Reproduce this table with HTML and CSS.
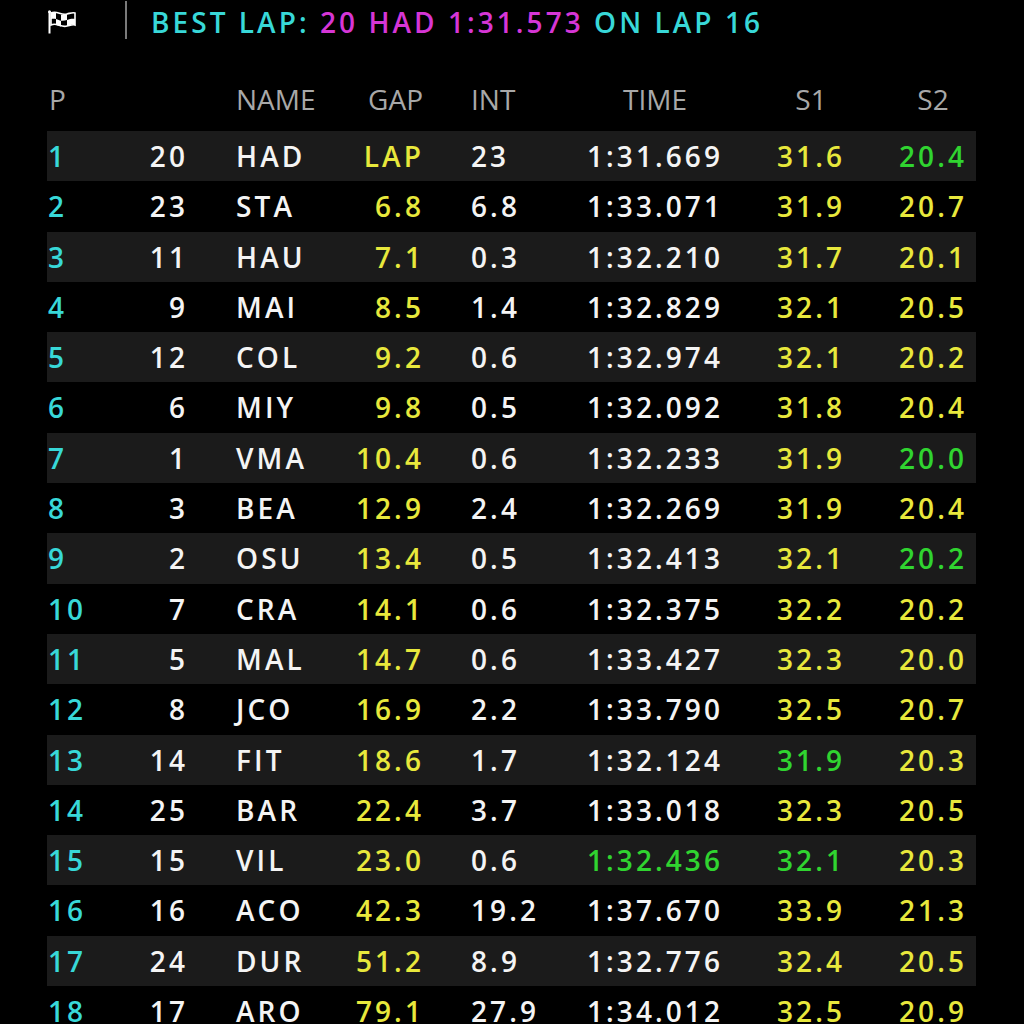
FILE: index.html
```html
<!DOCTYPE html>
<html>
<head>
<meta charset="utf-8">
<link rel="stylesheet" href="styles.css">
</head>
<body>
<div class="title">
  <svg class="flag" width="28" height="24" viewBox="0 0 28 24">
    <line x1="1.5" y1="1.5" x2="1.5" y2="23.5" stroke="#fff" stroke-width="2"/>
    <circle cx="1.5" cy="1.8" r="1.5" fill="#fff"/>
    <path d="M3 3 C9 0 13 6 19 4 C23 3 25 2 27 3 L27 15 C25 14 23 15 19 16 C13 18 9 12 3 15 Z" fill="#000" stroke="#fff" stroke-width="1.6"/>
    <path d="M3 3 C5 2.3 6.5 2.4 8 2.9 L8 9 C6.5 8.5 5 8.5 3 9 Z" fill="#fff"/>
    <path d="M13 4.7 C15 5 17 4.6 19 4 L19 10 C17 10.6 15 11 13 10.7 Z" fill="#fff"/>
    <path d="M8 9 C10 9.6 11.5 10.5 13 10.7 L13 16.5 C11.5 16.3 10 15.5 8 15 Z" fill="#fff"/>
    <path d="M19 10 C22 9 24.5 8.5 27 9 L27 15 C25 14 23 15 19 16 Z" fill="#fff"/>
  </svg>
  <span class="sep"></span>
  <span class="best"><span class="cy">BEST LAP: </span><span class="mg">20 HAD 1:31.573</span><span class="cy"> ON LAP 16</span></span>
</div>

<div class="board">
  <div class="row head">
    <span class="c1">P</span><span class="c2"></span><span class="c3">NAME</span><span class="c4">GAP</span><span class="c5">INT</span><span class="c6">TIME</span><span class="c7">S1</span><span class="c8">S2</span>
  </div>
  <div class="row odd"><span class="c1">1</span><span class="c2">20</span><span class="c3">HAD</span><span class="c4">LAP</span><span class="c5">23</span><span class="c6">1:31.669</span><span class="c7">31.6</span><span class="c8 g">20.4</span></div>
  <div class="row"><span class="c1">2</span><span class="c2">23</span><span class="c3">STA</span><span class="c4">6.8</span><span class="c5">6.8</span><span class="c6">1:33.071</span><span class="c7">31.9</span><span class="c8">20.7</span></div>
  <div class="row odd"><span class="c1">3</span><span class="c2">11</span><span class="c3">HAU</span><span class="c4">7.1</span><span class="c5">0.3</span><span class="c6">1:32.210</span><span class="c7">31.7</span><span class="c8">20.1</span></div>
  <div class="row"><span class="c1">4</span><span class="c2">9</span><span class="c3">MAI</span><span class="c4">8.5</span><span class="c5">1.4</span><span class="c6">1:32.829</span><span class="c7">32.1</span><span class="c8">20.5</span></div>
  <div class="row odd"><span class="c1">5</span><span class="c2">12</span><span class="c3">COL</span><span class="c4">9.2</span><span class="c5">0.6</span><span class="c6">1:32.974</span><span class="c7">32.1</span><span class="c8">20.2</span></div>
  <div class="row"><span class="c1">6</span><span class="c2">6</span><span class="c3">MIY</span><span class="c4">9.8</span><span class="c5">0.5</span><span class="c6">1:32.092</span><span class="c7">31.8</span><span class="c8">20.4</span></div>
  <div class="row odd"><span class="c1">7</span><span class="c2">1</span><span class="c3">VMA</span><span class="c4">10.4</span><span class="c5">0.6</span><span class="c6">1:32.233</span><span class="c7">31.9</span><span class="c8 g">20.0</span></div>
  <div class="row"><span class="c1">8</span><span class="c2">3</span><span class="c3">BEA</span><span class="c4">12.9</span><span class="c5">2.4</span><span class="c6">1:32.269</span><span class="c7">31.9</span><span class="c8">20.4</span></div>
  <div class="row odd"><span class="c1">9</span><span class="c2">2</span><span class="c3">OSU</span><span class="c4">13.4</span><span class="c5">0.5</span><span class="c6">1:32.413</span><span class="c7">32.1</span><span class="c8 g">20.2</span></div>
  <div class="row"><span class="c1">10</span><span class="c2">7</span><span class="c3">CRA</span><span class="c4">14.1</span><span class="c5">0.6</span><span class="c6">1:32.375</span><span class="c7">32.2</span><span class="c8">20.2</span></div>
  <div class="row odd"><span class="c1">11</span><span class="c2">5</span><span class="c3">MAL</span><span class="c4">14.7</span><span class="c5">0.6</span><span class="c6">1:33.427</span><span class="c7">32.3</span><span class="c8">20.0</span></div>
  <div class="row"><span class="c1">12</span><span class="c2">8</span><span class="c3">JCO</span><span class="c4">16.9</span><span class="c5">2.2</span><span class="c6">1:33.790</span><span class="c7">32.5</span><span class="c8">20.7</span></div>
  <div class="row odd"><span class="c1">13</span><span class="c2">14</span><span class="c3">FIT</span><span class="c4">18.6</span><span class="c5">1.7</span><span class="c6">1:32.124</span><span class="c7 g">31.9</span><span class="c8">20.3</span></div>
  <div class="row"><span class="c1">14</span><span class="c2">25</span><span class="c3">BAR</span><span class="c4">22.4</span><span class="c5">3.7</span><span class="c6">1:33.018</span><span class="c7">32.3</span><span class="c8">20.5</span></div>
  <div class="row odd"><span class="c1">15</span><span class="c2">15</span><span class="c3">VIL</span><span class="c4">23.0</span><span class="c5">0.6</span><span class="c6 g">1:32.436</span><span class="c7 g">32.1</span><span class="c8">20.3</span></div>
  <div class="row"><span class="c1">16</span><span class="c2">16</span><span class="c3">ACO</span><span class="c4">42.3</span><span class="c5">19.2</span><span class="c6">1:37.670</span><span class="c7">33.9</span><span class="c8">21.3</span></div>
  <div class="row odd"><span class="c1">17</span><span class="c2">24</span><span class="c3">DUR</span><span class="c4">51.2</span><span class="c5">8.9</span><span class="c6">1:32.776</span><span class="c7">32.4</span><span class="c8">20.5</span></div>
  <div class="row"><span class="c1">18</span><span class="c2">17</span><span class="c3">ARO</span><span class="c4">79.1</span><span class="c5">27.9</span><span class="c6">1:34.012</span><span class="c7">32.5</span><span class="c8">20.9</span></div>
</div>
</body>
</html>
```

FILE: styles.css
```css
html, body {
  margin: 0;
  padding: 0;
  background: #000;
  overflow: hidden;
}
body {
  font-family: "Open Sans", "Noto Sans", sans-serif;
  font-size: 28px;
  font-weight: 600;
  color: #f4f4f4;
  width: 1024px;
  height: 1024px;
}
.title {
  display: flex;
  align-items: center;
  height: 44px;
  padding-left: 48px;
}
.flag {
  display: block;
  width: 28px;
  height: 24px;
  margin-top: -1px;
}
.sep {
  display: block;
  width: 2px;
  height: 38px;
  background: #7a7a7a;
  margin-left: 49px;
  margin-top: -4px;
}
.best {
  margin-left: 24px;
  letter-spacing: 3.05px;
  line-height: 44px;
  white-space: nowrap;
}
.cy { color: #38d8d8; }
.mg { color: #d636d6; }

.board {
  margin: 30px 0 0 47px;
  width: 929px;
}
.row {
  display: grid;
  grid-template-columns: 80px 61px 152px 84px 136px 190px 122px 104px;
  height: 50.3px;
  line-height: 50.3px;
  letter-spacing: 3.1px;
  white-space: nowrap;
}
.row.head {
  height: 50px;
  line-height: 50px;
  margin-bottom: 7px;
  color: #a8a8a8;
  letter-spacing: 0;
  font-weight: 500;
}
.row.odd { background: #1b1b1b; }
.c1 { color: #38d8d8; padding-left: 1px; }
.head .c1 { color: #a8a8a8; padding-left: 2px; }
.c2 { text-align: right; }
.c3 { padding-left: 48px; }
.c4 { text-align: right; color: #e8e83c; }
.head .c4 { color: #a8a8a8; padding-right: 1px; }
.c5 { padding-left: 47px; }
.c6 { text-align: center; }
.c7 { text-align: center; color: #e8e83c; }
.c8 { text-align: center; color: #e8e83c; padding-left: 18px; }
.head .c7, .head .c8 { color: #a8a8a8; }
.g { color: #30d430 !important; }
```
